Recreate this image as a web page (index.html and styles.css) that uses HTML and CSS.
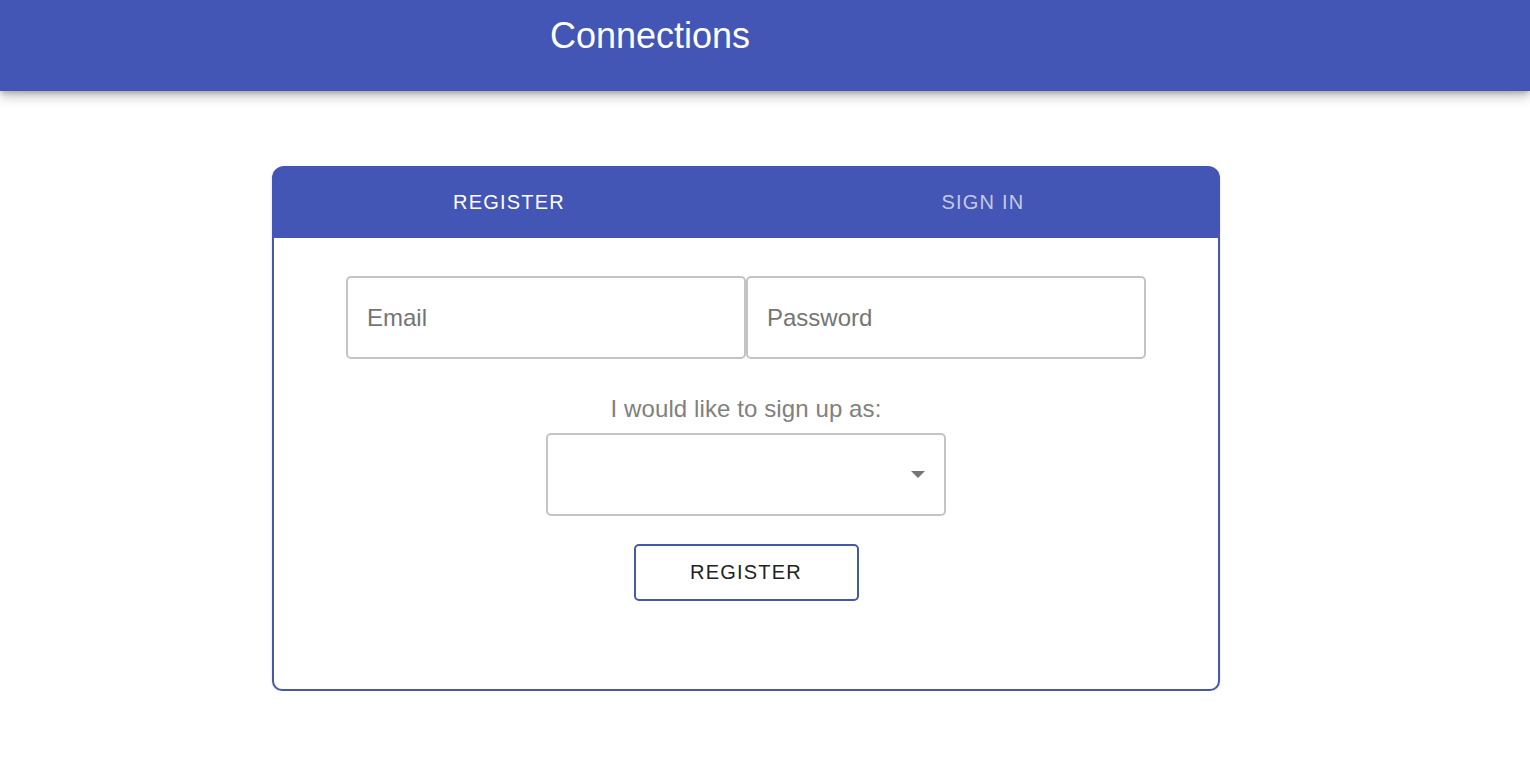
FILE: index.html
```html
<!DOCTYPE html>
<html lang="en">
<head>
<meta charset="utf-8">
<title>Connections</title>
<link rel="stylesheet" href="styles.css">
</head>
<body>
<header class="appbar">
  <h1 class="title">Connections</h1>
</header>
<main class="page">
  <section class="card">
    <nav class="tabs">
      <div class="tab tab-active">REGISTER</div>
      <div class="tab">SIGN IN</div>
    </nav>
    <div class="panel">
      <div class="field-row">
        <div class="field"><span class="placeholder">Email</span></div>
        <div class="field"><span class="placeholder">Password</span></div>
      </div>
      <p class="label">I would like to sign up as:</p>
      <div class="field select">
        <svg class="arrow" width="14" height="7" viewBox="0 0 14 7"><polygon points="0,0 14,0 7,7" fill="#757575"/></svg>
      </div>
      <button class="btn" type="button">REGISTER</button>
    </div>
  </section>
</main>
</body>
</html>
```
FILE: styles.css
```css
* { box-sizing: border-box; }
html, body { margin: 0; padding: 0; background: #fff; }
body { font-family: "Liberation Sans", Arial, sans-serif; }

.appbar {
  height: 91px;
  background: #4355b5;
  box-shadow: 0 3px 5px -1px rgba(0,0,0,0.2), 0 6px 10px 0 rgba(0,0,0,0.14), 0 1px 18px 0 rgba(0,0,0,0.12);
  display: flex;
  justify-content: center;
  padding-right: 230px;
}
.title {
  margin: 0;
  padding-top: 15px;
  font-weight: normal;
  font-size: 36px;
  line-height: 42px;
  color: #fff;
}

.page {
  padding-top: 75px;
  padding-left: 272px;
}

.card {
  width: 948px;
  border-radius: 12px;
  box-shadow: 0 1px 3px rgba(0,0,0,0.15);
}

.tabs {
  display: flex;
  height: 72px;
  background: #4355b5;
  border-radius: 12px 12px 0 0;
}
.tab {
  flex: 1;
  display: flex;
  align-items: center;
  justify-content: center;
  font-size: 20px;
  letter-spacing: 1.2px;
  color: rgba(255,255,255,0.7);
}
.tab-active { color: #fff; }

.panel {
  border: 2px solid #4758a6;
  border-top: none;
  border-radius: 0 0 10px 10px;
  height: 453px;
  padding-top: 38px;
  display: flex;
  flex-direction: column;
  align-items: center;
}

.field-row {
  display: flex;
}
.field {
  width: 400px;
  height: 83px;
  border: 2px solid #c4c4c4;
  border-radius: 5px;
  display: flex;
  align-items: center;
  padding-left: 19px;
}
.placeholder {
  font-size: 24px;
  color: #757575;
}

.label {
  margin: 36px 0 10px;
  font-size: 24px;
  line-height: 28px;
  letter-spacing: 0.1px;
  color: #808080;
}

.select {
  justify-content: flex-end;
  padding-right: 19px;
}

.btn {
  margin-top: 28px;
  width: 225px;
  height: 57px;
  background: #fff;
  border: 2px solid #4758a6;
  border-radius: 5px;
  font-family: "Liberation Sans", Arial, sans-serif;
  font-size: 20px;
  letter-spacing: 1.2px;
  color: #222;
  padding: 0;
}
```
